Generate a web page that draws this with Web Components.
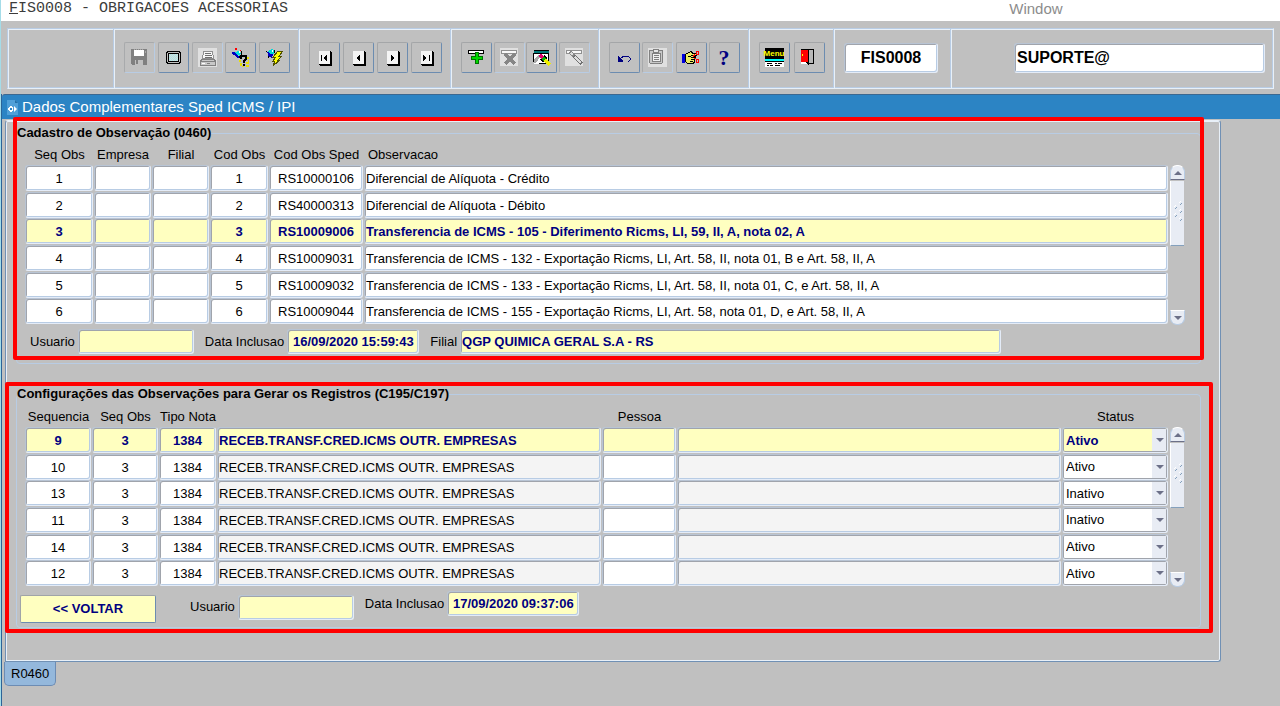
<!DOCTYPE html>
<html lang="pt-BR">
<head>
<meta charset="utf-8">
<meta name="viewport" content="width=device-width, initial-scale=1">
<title>FIS0008 - Obrigacoes Acessorias</title>
<style>
  body {
    margin: 0;
    background: #c0c0c0;
    color: #000;
    font: 13px/16px "Liberation Sans", Arial, sans-serif;
  }
</style>
</head>
<body>
<fis-app>
  <fis-menubar slot="menu"></fis-menubar>
  <fis-toolbar slot="toolbar"></fis-toolbar>
  <fis-window heading="Dados Complementares Sped ICMS / IPI" tab="R0460">
    <fis-group class="first" heading="Cadastro de Observação (0460)">
      <fis-grid name="observacoes"></fis-grid>
      <fis-field slot="footer" class="indent" label="Usuario" size="user"></fis-field>
      <fis-field slot="footer" label="Data Inclusao" size="date" value="16/09/2020 15:59:43"></fis-field>
      <fis-field slot="footer" label="Filial" size="long" value="QGP QUIMICA GERAL S.A - RS"></fis-field>
    </fis-group>
    <fis-group class="second" heading="Configurações das Observações para Gerar os Registros (C195/C197)">
      <fis-grid name="configuracoes"></fis-grid>
      <fis-action slot="footer">&lt;&lt; VOLTAR</fis-action>
      <fis-field slot="footer" class="spaced" label="Usuario" size="user"></fis-field>
      <fis-field slot="footer" class="raised" label="Data Inclusao" size="date" value="17/09/2020 09:37:06"></fis-field>
    </fis-group>
  </fis-window>
</fis-app>

<script>
// style shared by every text box
const fieldStyle = `
  * { box-sizing: border-box; }
  input, select {
    display: block;
    width: 100%;
    margin: 0;
    padding: 1px 1px 0;
    border: 1px solid;
    border-color: #b8c4d4 #e4ecf8 #e4ecf8 #b8c4d4;
    border-radius: 3px;
    box-shadow: inset 1px 1px #a0a4ac, inset -1px -1px #b8cce4;
    background: #fff;
    color: #000;
    font: inherit;
    outline: none;
  }
`;

const navBox = `<path fill="#000" d="M6 4h12v14h-12z"/><path fill="#f4f4f4" d="M5 3h12v14h-12z"/><path fill="#000" d="M16 3h1v14h-12v-1h11z"/>`;

const icons = {
  save: `<path fill="#808080" d="M2 1h16v16H3l-1-1z"/><path fill="#fff" d="M5 2h10v6H5z"/><path fill="#a8a8a8" d="M5 1h1v1H5zM7 1h1v1H7zM9 1h1v1H9zM11 1h1v1h-1zM13 1h1v1h-1zM16 3h1v2h-1z"/><path fill="#c0c0c0" d="M6 12h8v5H6z"/><path fill="#808080" d="M7 12h2v4H7z"/>`,
  screen: `<path fill="#000" d="M4 3h13v1h1v11h-1v1H4v-1H3V4h1z"/><path fill="#c0c0c0" d="M5 4h11v1h1v9h-1v1H5v-1H4V5h1z"/><path fill="#000" d="M5 5h11v9H5z"/><path fill="#a0ecec" d="M6 6h9v7H6z"/><path stroke="#e0d8d8" stroke-dasharray="1 1" d="M6 6.5h9M7 7.5h8M6 8.5h9M7 9.5h8M6 10.5h9M7 11.5h8M6 12.5h9"/>`,
  print: `<path fill="#e0e0e0" d="M1 0h19v19H1z"/><path fill="#f8f8f8" stroke="#909090" d="M6.5 3.5h9l1 7h-11z"/><path stroke="#707070" d="M8 5.500h6M8 7.500h7M8 9.500h7"/><path fill="#c8c8c8" stroke="#808080" d="M4.500 11.500h13l1 2v4h-15v-4z"/><path stroke="#808080" d="M4 13.500h14M10 15.500h3"/><path fill="#fff" d="M5 15h3v1H5z"/>`,
  ask: `<path fill="#e8e000" d="M10 9h2v2h-2zM17 9h2v2h-2zM9 12h2v2H9zM18 12h1v2h-1zM16 14h3v2h-3zM10 15h2v3h-2zM16 17h3v2h-3zM12 18h2v1h-2z"/><path fill="#000" d="M3 4h1v1H3zM5 1h2v1H5zM11 3h1v4h-1zM9 8h1v2H9z"/><path fill="#f00" d="M5 0h2v2H5zM10 2h1v1h-1z"/><path fill="#0000c0" d="M2 4h3l3 2 1 4H7L4 7H3z"/><path fill="#00e0e0" d="M5 4l3-1 3 2-1 3-3-1z"/><path fill="#fff" d="M9 3h1v2H9z"/><path fill="none" stroke="#000" stroke-width="2" d="M11 11V8h5v3l-2 2v2M13 17h2"/>`,
  execute: `<path fill="#0000c0" d="M3 4h3l3 2-1 4-3-1z"/><path fill="#00d8d8" d="M4 3l4-2 2 1v4L6 6z"/><path fill="#fff" d="M8 2h1v2H8z"/><path fill="#000" d="M2 3h1v1H2zM10 2h1v3h-1zM4 8h1v2H4z"/><path fill="#ff0" stroke="#505000" d="M14 3h5l-4 5h3l-4 4h2l-7 6 2-5H9l3-4H9z"/>`,
  first: `${navBox}<path fill="#000" d="M7 7h1v6H7zM9 10l4-3v6z"/>`,
  previous: `${navBox}<path fill="#000" d="M8 10l4-3v6z"/>`,
  next: `${navBox}<path fill="#000" d="M9 7l4 3-4 3z"/>`,
  last: `${navBox}<path fill="#000" d="M7 7l4 3-4 3zM13 7h1v6h-1z"/>`,
  add: `<path fill="#fff" stroke="#000" d="M2.500 2.500h15v3h-15z"/><path fill="#007000" d="M9 4h4v4h4v4h-4v4H9v-4H5V8h4z"/><path fill="#00d800" d="M10 5h2v4h4v2h-4v4h-2v-4H6V9h4z"/>`,
  remove: `<path fill="#e0e0e0" d="M1 0h18v18H1z"/><path fill="#f8f8f8" stroke="#909090" d="M2.500 2.500h15v3h-15z"/><path fill="none" stroke="#868686" stroke-width="3" d="M6 6l10 10M16 6L6 16"/>`,
  query: `<path fill="#007878" d="M3 2h15v3H3z"/><path fill="#fff" d="M3 5h15v11H3z"/><path fill="none" stroke="#000" d="M2.500 14V5.500h15v10h-10"/><path stroke="#000" d="M3 2.500h15M6 8.500h3"/><path fill="#a8a8a8" d="M3 12l4-5 2 2-4 6H3z"/><path stroke="#e0006a" stroke-width="4" d="M9 7l4 4"/><path stroke="#00b000" stroke-width="4" d="M12 10l3 3"/><path stroke="#ee0" stroke-width="3" d="M14 12l5 5"/><path stroke="#000" d="M9 11l4 3M13 7l3 4"/>`,
  cancel: `<path fill="#e0e0e0" d="M1 0h18v18H1z"/><path fill="#f8f8f8" stroke="#909090" d="M2.500 2.500h15v3h-15z"/><path stroke="#888" stroke-width="4" d="M6 4l6 6"/><path stroke="#707070" stroke-width="4" d="M10 8l8 8"/><path stroke="#ddd" stroke-width="2" d="M7 5l2 2M11 9l6 6"/>`,
  undo: `<path fill="#000080" d="M4 8l5 5v1H4z"/><path fill="none" stroke="#000080" d="M6 11l4-3h4l2 2v2l-2 2"/>`,
  clipboard: `<path fill="#e0e0e0" d="M1 0h19v19H1z"/><path fill="#c8c8c8" stroke="#808080" d="M2.500 2.500h13v12l-1 1h-11l-1-1z"/><path fill="#f0f0f0" stroke="#808080" d="M5.500 5.500h8v8h-8z"/><path fill="#e8e8e8" stroke="#808080" d="M6.500 1.500h5v3h-5z"/><path stroke="#808080" d="M7 7.500h5M7 9.500h5M7 11.500h5"/>`,
  hand: `<path fill="#0000e0" d="M1 6h3v9H1z"/><path fill="#ee6" stroke="#000" d="M4.500 6.500l3-2 3-1 1 2h4v2h-4l3 1v2l-1 1v3l-2 1h-5l-2-2z"/><path fill="none" stroke="#000" d="M7 8.500h3M10 7.500h4M10 9.500h5M10 11.500h4M9 13.500h3"/><path fill="none" stroke="#f00" d="M15.500 3.500h2v3h-2zM14 6l-2 3M13 10l2 1M15.500 11.500h2v3h-2z"/>`,
  help: `<text x="10" y="17" text-anchor="middle" font-family="Liberation Serif, serif" font-weight="700" font-size="22" fill="#000080">?</text>`,
  menu: `<path fill="#000" d="M1 0h19v10H1z"/><text x="10" y="8" text-anchor="middle" font-family="Liberation Sans Narrow, Liberation Sans, sans-serif" font-size="8" font-weight="700" fill="#ff0">Menu</text><path fill="#000" d="M1 10h19v4H1z"/><path fill="#0ff" d="M1 11h19v2H1z"/><path fill="#fff" d="M1 14h19v5H1z"/><path stroke="#000" d="M3 15.500h5M11 15.500h2M14 15.500h4M3 17.500h2M6 17.500h3M11 17.500h5"/>`,
  exit: `<path fill="#000" d="M2 1h13v15H7v-1h7V2H2z"/><path fill="#fff" d="M2 14h6v2H2z"/><path fill="#b8b8b8" d="M10 2h4v13h-4z"/><path fill="#f00" d="M2 2h8l-1 1v12l-3-1H2z"/><path fill="none" stroke="#000" d="M9.500 2v14l-2-2"/><path fill="#ff0" d="M3 6h1v2H3z"/>`
};

class FisApp extends HTMLElement {
  constructor() {
    super();
    this.attachShadow({ mode: "open" }).innerHTML = `
      <style>
        :host {
          display: flex;
          flex-direction: column;
          box-sizing: border-box;
          min-height: 100vh;
          border-left: 1px solid #a4dce8;
        }
      </style>
      <slot name="menu"></slot>
      <slot name="toolbar"></slot>
      <slot></slot>
    `;
  }
}

class FisMenubar extends HTMLElement {
  constructor() {
    super();
    this.attachShadow({ mode: "open" }).innerHTML = `
      <style>
        :host { display: block; background: #fff; }
        nav {
          display: flex;
          justify-content: space-between;
          height: 21px;
          padding: 0 17% 0 8px;
        }
        a { color: #8c8c8c; font-size: 15px; line-height: 17px; text-decoration: none; }
        .program { color: #3c3c3c; font-family: "Liberation Mono", monospace; }
      </style>
      <nav>
        <a class="program" href="#programa"><u>F</u>IS0008 - OBRIGACOES ACESSORIAS</a>
        <a href="#window">Window</a>
      </nav>
    `;
  }
}

class FisToolButton extends HTMLElement {
  connectedCallback() {
    if (this.shadowRoot) return;
    const off = this.hasAttribute("off");
    this.attachShadow({ mode: "open" }).innerHTML = `
      <style>
        :host { display: block; }
        button {
          display: block;
          box-sizing: border-box;
          width: 31px;
          height: 31px;
          padding: 4px;
          border: 1px solid;
          border-color: #a4a6a8 #6c8cb0 #6c8cb0 #a4a6a8;
          border-radius: 2px;
          background: #c0c0c0;
        }
        button:disabled { border-color: #a8aaac #b8cce4 #b8cce4 #a8aaac; }
        svg { display: block; overflow: visible; width: 21px; height: 20px; }
      </style>
      <button type="button" aria-label="${this.getAttribute("label")}" ${off ? "disabled" : ""}>
        <svg viewBox="0 0 21 20" fill="none" shape-rendering="crispEdges">${icons[this.getAttribute("icon")]}</svg>
      </button>
    `;
  }
}

class FisToolbar extends HTMLElement {
  constructor() {
    super();
    this.attachShadow({ mode: "open" });
  }

  connectedCallback() {
    const groups = [
      { width: 185, items: [["save", "Salvar", 1], ["screen", "Tela"], ["print", "Imprimir", 1], ["ask", "Entrar consulta"], ["execute", "Executar consulta"]] },
      { width: 152, items: [["first", "Primeiro"], ["previous", "Anterior"], ["next", "Próximo"], ["last", "Último"]] },
      { width: 148, items: [["add", "Inserir"], ["remove", "Excluir", 1], ["query", "Consultar"], ["cancel", "Limpar", 1]] },
      { width: 150, items: [["undo", "Desfazer"], ["clipboard", "Colar", 1], ["hand", "Recortar"], ["help", "Ajuda"]] },
      { width: 85, items: [["menu", "Menu"], ["exit", "Sair"]] }
    ];
    const html = groups.map((g) => `
      <div class="group" style="width: ${g.width}px">
        ${g.items.map(([icon, label, off]) => `<fis-tool-button icon="${icon}" label="${label}" ${off ? "off" : ""}></fis-tool-button>`).join("")}
      </div>
    `).join("");

    this.shadowRoot.innerHTML = `
      <style>
        ${fieldStyle}
        :host { display: block; padding: 7px 6px 5px; background: #c0c0c0; }
        .frame {
          display: flex;
          height: 61px;
          border: 1px solid #b8cce4;
          border-color: #b8cce4 #e8f0f8 #e8f0f8 #b8cce4;
          box-shadow: inset 1px 1px #e8f0f8, inset -1px -1px #b8cce4;
        }
        .blank { width: 105px; }
        .group {
          display: flex;
          flex: none;
          justify-content: space-between;
          padding: 13px 8px 0 10px;
          border-left: 1px solid #b8cce4;
          box-shadow: inset 1px 0 #e8f0f8;
        }
        .program { width: 117px; padding: 14px 12px 0 10px; }
        .user { flex: 1; justify-content: flex-end; padding: 14px 8px 0; }
        input { height: 30px; padding: 0 2px; font-size: 16px; font-weight: bold; }
        .program input { text-align: center; }
        .user input { width: 251px; }
      </style>
      <div class="frame">
        <div class="blank"></div>
        ${html}
        <div class="group program"><input aria-label="Programa" value="FIS0008" readonly></div>
        <div class="group user"><input aria-label="Usuario conectado" value="SUPORTE@" readonly></div>
      </div>
    `;
  }
}

class FisWindow extends HTMLElement {
  connectedCallback() {
    if (this.shadowRoot) return;
    this.attachShadow({ mode: "open" }).innerHTML = `
      <style>
        :host { display: block; flex: 1; border-left: 1px solid #2c6498; }
        header {
          display: flex;
          align-items: center;
          gap: 4px;
          box-sizing: border-box;
          height: 25px;
          padding: 0 5px;
          border-top: 1px solid #3c6890;
          border-radius: 3px 0 0 0;
          background: #2c84c4;
          color: #fff;
        }
        h1 { margin: 0; font-size: 15px; font-weight: normal; line-height: 24px; }
        header svg { width: 11px; height: 15px; }
        main {
          display: flex;
          flex-direction: column;
          gap: 22px;
          margin: 1px 59px 0 3px;
          padding: 4px 19px 33px 10px;
          border: 1px solid;
          border-color: #e8f0f8 #7090b4 #7090b4 #7090b4;
          border-radius: 3px 3px 3px 0;
          box-shadow: inset 0 0 0 1px #e8f0f8;
        }
        .tab {
          height: 24px;
          margin-left: 2px;
          padding: 0 6px;
          border: 1px solid #6c8cb4;
          border-top: 0;
          border-radius: 0 0 5px 5px;
          background: #94b8dc;
          color: #000;
          font: inherit;
        }
      </style>
      <header>
        <svg viewBox="0 0 11 15"><path fill="#50a0d8" d="M0 0h8l3 3v12H0z"/><path fill="#2470a8" d="M8 0v3h3z"/><path fill="#fff" d="M2 7h1V6h2v1h1v4H5v1H3v-1H2v-1H1V8h1zM7 6l3 3-3 3z"/><path fill="#2c84c4" d="M3 8h2v2H3z"/></svg>
        <h1>${this.getAttribute("heading")}</h1>
      </header>
      <main><slot></slot></main>
      <button class="tab" type="button">${this.getAttribute("tab")}</button>
    `;
  }
}

class FisGroup extends HTMLElement {
  connectedCallback() {
    if (this.shadowRoot) return;
    this.attachShadow({ mode: "open" }).innerHTML = `
      <style>
        :host { display: block; position: relative; }
        /* red marker laid over the group */
        :host::after {
          content: "";
          position: absolute;
          border: 4px solid #f00;
          border-radius: 2px;
          pointer-events: none;
        }
        :host(.first)::after { inset: -8px -3px 4px -3px; }
        :host(.second)::after { inset: -4px -12px -5px -11px; }
        fieldset {
          min-width: 0;
          margin: 0;
          padding: 4px 0 0;
          border: 1px solid #b8cce4;
          border-radius: 4px;
        }
        :host(.second) fieldset { padding-top: 5px; }
        legend { padding: 0; font-weight: bold; }
        .body { padding: 0 15px 0 8px; }
        .footer { display: flex; align-items: center; gap: 11px; padding: 4px 3px; }
        :host(.first) .footer { padding-bottom: 9px; }
        :host(.second) .footer { height: 32px; }
        ::slotted(.indent) { margin-left: 10px; }
        ::slotted(.spaced) { margin-left: 23px; }
        ::slotted(.raised) { align-self: flex-start; }
        ::slotted(fis-action) { align-self: flex-end; }
      </style>
      <fieldset>
        <legend>${this.getAttribute("heading")}</legend>
        <div class="body"><slot></slot></div>
        <div class="footer"><slot name="footer"></slot></div>
      </fieldset>
    `;
  }
}

class FisField extends HTMLElement {
  connectedCallback() {
    if (this.shadowRoot) return;
    this.attachShadow({ mode: "open" }).innerHTML = `
      <style>
        ${fieldStyle}
        :host { display: block; }
        label { display: flex; align-items: center; gap: 3px; white-space: nowrap; }
        input { height: 25px; padding: 0 1px; background: #ffffc0; color: #000080; font-weight: bold; }
        .user { width: 116px; }
        .date { width: 132px; text-align: center; }
        .long { width: 541px; }
      </style>
      <label>${this.getAttribute("label")}
        <input class="${this.getAttribute("size")}" value="${this.getAttribute("value") || ""}" readonly>
      </label>
    `;
  }
}

class FisAction extends HTMLElement {
  constructor() {
    super();
    this.attachShadow({ mode: "open" }).innerHTML = `
      <style>
        :host { display: block; }
        button {
          width: 136px;
          height: 28px;
          padding: 0;
          border: 1px solid;
          border-color: #a0a4a8 #6c8cb0 #6c8cb0 #a0a4a8;
          border-radius: 2px;
          background: #ffffc0;
          color: #000080;
          font: inherit;
          font-weight: bold;
        }
      </style>
      <button type="button"><slot></slot></button>
    `;
  }
}

class FisScrollbar extends HTMLElement {
  constructor() {
    super();
    this.attachShadow({ mode: "open" }).innerHTML = `
      <style>
        :host { display: flex; flex-direction: column; width: 15px; }
        button {
          display: block;
          height: 15px;
          padding: 0;
          border: 1px solid #b8cce4;
          border-top-color: #fff;
          background: #e8ecf4;
        }
        .up { border-radius: 7px 7px 0 0; border-bottom-color: #6c7088; }
        .down { border-radius: 0 0 7px 7px; margin-top: auto; }
        svg { display: block; margin: auto; }
        .thumb {
          height: 64px;
          margin: 1px 1px 0 0;
          border-left: 1px solid #fff;
          border-bottom: 1px solid #84a0bc;
          background: #e8ecf4;
        }
      </style>
      <button class="up" type="button" aria-label="Rolar para cima"><svg width="8" height="4"><path fill="#6c7088" d="M4 0l4 4H0z"/></svg></button>
      <div class="thumb">
        <svg width="13" height="64"><path stroke="#fff" d="M8 22l2-2M3 26l2-2M8 30l2-2M3 34l2-2M8 38l2-2"/><path stroke="#84a0bc" d="M9 24l2-2M4 28l2-2M9 32l2-2M4 36l2-2M9 40l2-2"/></svg>
      </div>
      <button class="down" type="button" aria-label="Rolar para baixo"><svg width="8" height="4"><path fill="#6c7088" d="M0 0h8L4 4z"/></svg></button>
    `;
  }
}

const nota = ["3", "1384", "RECEB.TRANSF.CRED.ICMS OUTR. EMPRESAS", "", ""];

const grids = {
  observacoes: {
    current: 2,
    columns: [
      { title: "Seq Obs", width: 69, center: true },
      { title: "Empresa", width: 58, center: true },
      { title: "Filial", width: 58, center: true },
      { title: "Cod Obs", width: 59, center: true },
      { title: "Cod Obs Sped", width: 95, center: true },
      { title: "Observacao", left: true }
    ],
    rows: [
      ["1", "", "", "1", "RS10000106", "Diferencial de Alíquota - Crédito"],
      ["2", "", "", "2", "RS40000313", "Diferencial de Alíquota - Débito"],
      ["3", "", "", "3", "RS10009006", "Transferencia de ICMS - 105 - Diferimento Ricms, LI, 59, II, A, nota 02, A"],
      ["4", "", "", "4", "RS10009031", "Transferencia de ICMS - 132 - Exportação Ricms, LI, Art. 58, II, nota 01, B e Art. 58, II, A"],
      ["5", "", "", "5", "RS10009032", "Transferencia de ICMS - 133 - Exportação Ricms, LI, Art. 58, II, nota 01, C, e Art. 58, II, A"],
      ["6", "", "", "6", "RS10009044", "Transferencia de ICMS - 155 - Exportação Ricms, LI, Art. 58, nota 01, D, e Art. 58, II, A"]
    ]
  },
  configuracoes: {
    current: 0,
    columns: [
      { title: "Sequencia", width: 67, center: true },
      { title: "Seq Obs", width: 67, center: true },
      { title: "Tipo Nota", width: 58, center: true },
      { title: "", name: "Descricao", locked: true },
      { title: "Pessoa", width: 75 },
      { title: "", name: "Nome", locked: true },
      { title: "Status", width: 107, select: true }
    ],
    rows: [
      ["9", ...nota, "Ativo"],
      ["10", ...nota, "Ativo"],
      ["13", ...nota, "Inativo"],
      ["11", ...nota, "Inativo"],
      ["14", ...nota, "Ativo"],
      ["12", ...nota, "Ativo"]
    ]
  }
};

class FisGrid extends HTMLElement {
  constructor() {
    super();
    this.attachShadow({ mode: "open" });
  }

  connectedCallback() {
    this.render();
  }

  cell(column, value, line) {
    const label = `${column.title || column.name} ${line + 1}`;
    if (column.select) {
      const other = value === "Ativo" ? "Inativo" : "Ativo";
      return `<td><div class="drop"><select aria-label="${label}"><option selected>${value}</option><option>${other}</option></select></div></td>`;
    }
    const css = `${column.center ? "center" : ""} ${column.locked ? "locked" : ""}`;
    return `<td><input class="${css}" aria-label="${label}" value="${value}" ${column.locked ? "readonly" : ""}></td>`;
  }

  render() {
    const { columns, rows, current } = grids[this.getAttribute("name")];
    this.shadowRoot.innerHTML = `
      <style>
        ${fieldStyle}
        :host { display: flex; align-items: flex-end; gap: 1px; }
        table {
          flex: 1;
          min-width: 0;
          height: 180px;
          table-layout: fixed;
          border-collapse: collapse;
        }
        th { height: 20px; padding: 0; font-weight: normal; white-space: nowrap; }
        th.left { padding-left: 4px; text-align: left; }
        td { padding: 0 1px 0 0; vertical-align: top; }
        input, select { height: 26px; }
        .center { text-align: center; }
        .locked { background: #f4f4f4; }
        select {
          appearance: none;
          padding: 1px 18px 0 3px;
          box-shadow: inset 0 0 0 1px #a0a4ac;
        }
        .drop { position: relative; }
        .drop::before {
          content: "";
          position: absolute;
          inset: 2px 2px 2px auto;
          width: 14px;
          background: #e8ecf4;
          pointer-events: none;
        }
        .drop::after {
          content: "";
          position: absolute;
          top: 11px;
          right: 4px;
          border: 4px solid transparent;
          border-top-color: #6c7088;
          border-bottom: 0;
          pointer-events: none;
        }
        .current input, .current select { background: #ffffc0; color: #000080; font-weight: bold; }
        fis-scrollbar { flex: none; height: 160px; }
      </style>
      <table>
        <colgroup>${columns.map((c) => `<col ${c.width ? `style="width: ${c.width}px"` : ""}>`).join("")}</colgroup>
        <thead>
          <tr>${columns.map((c) => `<th class="${c.left ? "left" : ""}">${c.title}</th>`).join("")}</tr>
        </thead>
        <tbody>
          ${rows.map((row, i) => `<tr class="${i === current ? "current" : ""}">${row.map((v, c) => this.cell(columns[c], v, i)).join("")}</tr>`).join("")}
        </tbody>
      </table>
      <fis-scrollbar></fis-scrollbar>
    `;
  }
}

customElements.define("fis-app", FisApp);
customElements.define("fis-menubar", FisMenubar);
customElements.define("fis-tool-button", FisToolButton);
customElements.define("fis-toolbar", FisToolbar);
customElements.define("fis-window", FisWindow);
customElements.define("fis-group", FisGroup);
customElements.define("fis-field", FisField);
customElements.define("fis-action", FisAction);
customElements.define("fis-scrollbar", FisScrollbar);
customElements.define("fis-grid", FisGrid);
</script>
</body>
</html>
